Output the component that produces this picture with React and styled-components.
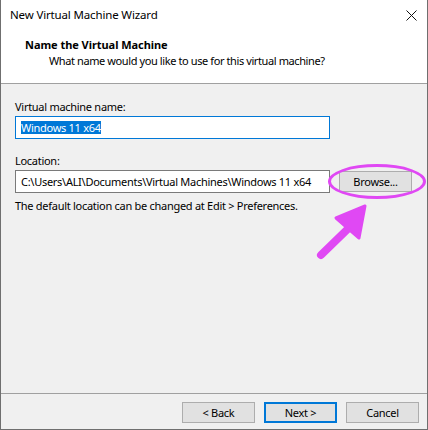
import React from 'react';
import styled, { createGlobalStyle } from 'styled-components';

const GlobalStyle = createGlobalStyle`
  html, body {
    margin: 0;
    padding: 0;
    background: #ffffff;
  }
  * {
    box-sizing: border-box;
  }
`;

const UI_FONT = `"Noto Sans", "Open Sans", sans-serif`;

const Window = styled.div`
  width: 428px;
  height: 430px;
  display: flex;
  flex-direction: column;
  border-left: 1px solid #6f6f6f;
  border-right: 1px solid #6f6f6f;
  border-bottom: 1px solid #6f6f6f;
  font-family: ${UI_FONT};
  font-size: 11px;
  letter-spacing: -0.28px;
  line-height: 16px;
  color: #000;
  background: #f0f0f0;
  position: relative;
`;

const TitleBar = styled.div`
  height: 30px;
  flex: none;
  display: flex;
  align-items: center;
  justify-content: space-between;
  padding: 0 10px 0 9px;
  background: #ffffff;
`;

const TitleText = styled.span`
  font-size: 11.5px;
  letter-spacing: -0.15px;
`;

const CloseIcon = () => (
  <svg width="11" height="11" viewBox="0 0 11 11">
    <path d="M0.5 0.5 L10.5 10.5 M10.5 0.5 L0.5 10.5" stroke="#111" strokeWidth="1" />
  </svg>
);

const Header = styled.div`
  flex: none;
  background: #ffffff;
  padding: 7px 0 14px 24px;
  border-bottom: 1px solid #a0a0a0;
`;

const HeaderTitle = styled.div`
  font-weight: 700;
  letter-spacing: -0.05px;
`;

const HeaderSub = styled.div`
  padding-left: 24px;
  letter-spacing: -0.4px;
`;

const Body = styled.div`
  flex: 1;
  padding: 15px 14px 0 14px;
  display: flex;
  flex-direction: column;
`;

const Label = styled.div`
  margin-bottom: 1px;
`;

const Field = styled.div`
  width: 315px;
  height: 23px;
  background: #ffffff;
  border: 1px solid ${p => (p.$focused ? '#0078d7' : '#7a7a7a')};
  display: flex;
  align-items: center;
  padding-left: 5px;
  white-space: nowrap;
  overflow: hidden;
`;

const Selected = styled.span`
  background: #0078d7;
  color: #ffffff;
  line-height: 13px;
`;

const Row = styled.div`
  display: flex;
  align-items: center;
  gap: 9px;
  margin-bottom: 5px;
`;

const Button = styled.div`
  width: 73px;
  height: 21px;
  display: flex;
  align-items: center;
  justify-content: center;
  background: #e1e1e1;
  border: ${p => (p.$default ? '2px solid #0078d7' : '1px solid #adadad')};
`;

const Marked = styled.div`
  position: relative;
  display: flex;
`;

const Ring = styled.div`
  position: absolute;
  left: -11px;
  top: -7px;
  width: 98px;
  height: 35px;
  border: 3px solid #e048f4;
  border-radius: 50%;
  pointer-events: none;
`;

const Arrow = styled.svg`
  position: absolute;
  left: 310px;
  top: 198px;
  overflow: visible;
`;

const Spacer = styled.div`
  height: 14px;
`;

const Footer = styled.div`
  flex: none;
  border-top: 1px solid #a0a0a0;
  padding: 8px 8px 6px 0;
  display: flex;
  justify-content: flex-end;
  gap: 9px;
`;

export default function App() {
  return (
    <>
      <GlobalStyle />
      <Window>
        <TitleBar>
          <TitleText>New Virtual Machine Wizard</TitleText>
          <CloseIcon />
        </TitleBar>
        <Header>
          <HeaderTitle>Name the Virtual Machine</HeaderTitle>
          <HeaderSub>What name would you like to use for this virtual machine?</HeaderSub>
        </Header>
        <Body>
          <Label>Virtual machine name:</Label>
          <Field $focused>
            <Selected>Windows 11 x64</Selected>
          </Field>
          <Spacer />
          <Label>Location:</Label>
          <Row>
            <Field>C:\Users\ALI\Documents\Virtual Machines\Windows 11 x64</Field>
            <Marked>
              <Button>Browse...</Button>
              <Ring />
            </Marked>
          </Row>
          <div>The default location can be changed at Edit &gt; Preferences.</div>
        </Body>
        <Footer>
          <Button>&lt; Back</Button>
          <Button $default>Next &gt;</Button>
          <Button>Cancel</Button>
        </Footer>
        <Arrow width="70" height="70" viewBox="0 0 70 70">
          <path d="M10 57 L46 22" stroke="#e048f4" strokeWidth="8" strokeLinecap="round" fill="none" />
          <path d="M54 8 L25 20 L48 40 Z" fill="#e048f4" stroke="#e048f4" strokeWidth="3" strokeLinejoin="round" />
        </Arrow>
      </Window>
    </>
  );
}
